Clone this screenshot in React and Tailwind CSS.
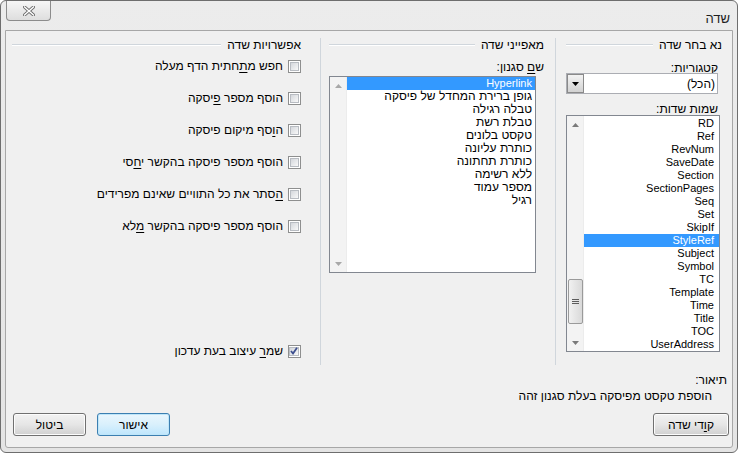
import React from 'react'

const fieldNames = [
  'RD', 'Ref', 'RevNum', 'SaveDate', 'Section', 'SectionPages', 'Seq', 'Set', 'SkipIf',
  'StyleRef', 'Subject', 'Symbol', 'TC', 'Template', 'Time', 'Title', 'TOC', 'UserAddress',
]

const styleNames = [
  'Hyperlink',
  'גופן ברירת המחדל של פיסקה',
  'טבלה רגילה',
  'טבלת רשת',
  'טקסט בלונים',
  'כותרת עליונה',
  'כותרת תחתונה',
  'ללא רשימה',
  'מספר עמוד',
  'רגיל',
]

function Heading({ children }) {
  return (
    <div className="flex items-center h-[14px] gap-[6px]">
      <span className="whitespace-nowrap">{children}</span>
      <div className="flex-1 h-[2px] border-t border-t-[#d0d6dc] border-b border-b-white" />
    </div>
  )
}

function Arrow({ up, color = '#6d6d6d' }) {
  // tiny scroll arrow, drawn with svg
  return (
    <svg width="7" height="4" viewBox="0 0 7 4" className={up ? '' : 'rotate-180'}>
      <path d="M0 4 L3.5 0 L7 4 Z" fill={color} />
    </svg>
  )
}

function Scrollbar({ thumb, arrowColor }) {
  return (
    <div className="w-[17px] shrink-0 flex flex-col bg-[#f3f3f3] border-r border-r-[#ececec]">
      <div className="h-[17px] flex items-center justify-center">
        <Arrow up color={arrowColor} />
      </div>
      <div className="flex-1">
        {thumb && (
          <div className="mt-[146px] mx-auto w-[15px] h-[45px] rounded-[2px] border border-[#9a9a9a] bg-gradient-to-r from-[#f1f1f1] to-[#d9d9d9] flex flex-col items-center justify-center gap-[1px]">
            <div className="w-[7px] h-[1px] bg-[#5c5c5c]" />
            <div className="w-[7px] h-[1px] bg-[#5c5c5c]" />
            <div className="w-[7px] h-[1px] bg-[#5c5c5c]" />
          </div>
        )}
      </div>
      <div className="h-[17px] flex items-center justify-center">
        <Arrow color={arrowColor} />
      </div>
    </div>
  )
}

function Checkbox({ checked }) {
  return (
    <span className="w-[13px] h-[13px] shrink-0 border border-[#8e8f8f] bg-white p-[1px] flex">
      <span className="flex-1 border border-[#b8bcc2] bg-gradient-to-br from-[#d4d7dc] to-[#f9f9f9] flex items-center justify-center">
        {checked && (
          <svg width="8" height="8" viewBox="0 0 8 8">
            <path d="M1 4 L3 6.5 L7 0.8" stroke="#3d4f8f" strokeWidth="1.8" fill="none" />
          </svg>
        )}
      </span>
    </span>
  )
}

function Option({ checked, children }) {
  return (
    <div className="flex items-center h-[14px] gap-[5px]">
      <Checkbox checked={checked} />
      <span className="whitespace-nowrap">{children}</span>
    </div>
  )
}

function Button({ children, primary, className = '' }) {
  return (
    <div
      className={`h-[23px] rounded-[3px] border flex items-center justify-center ${
        primary
          ? 'border-[#3c7fb1] bg-gradient-to-b from-[#eaf6fd] via-[#d9f0fc] to-[#bee6fd] shadow-[inset_0_0_0_1px_#bfe6f9]'
          : 'border-[#707070] bg-gradient-to-b from-[#f2f2f2] via-[#e6e6e6] to-[#d0d0d0] shadow-[inset_0_0_0_1px_#fcfcfc]'
      } ${className}`}
    >
      {children}
    </div>
  )
}

export default function App() {
  return (
    <div
      dir="rtl"
      className="w-[738px] h-[453px] bg-gradient-to-b from-[#ececec] to-[#e4e4e4] border border-[#6e6e6e] rounded-[6px] flex flex-col overflow-hidden text-[12px] text-black font-['Liberation_Sans',Arial,sans-serif]"
    >
      {/* title bar */}
      <div className="h-[29px] shrink-0 flex items-start justify-between">
        <div className="pr-[7px] pt-[8px] text-[13px] text-[#1e1e1e]">שדה</div>
        <div className="ml-[5px] w-[45px] h-[20px] rounded-b-[4px] border border-t-0 border-[#8c8c8c] bg-gradient-to-b from-[#f6f6f6] to-[#dedede] flex items-center justify-center">
          <svg width="12" height="10" viewBox="0 0 12 10">
            <path d="M1.5 1 L10.5 9 M10.5 1 L1.5 9" stroke="#6b6b6b" strokeWidth="3.2" strokeLinecap="square" />
            <path d="M1.5 1 L10.5 9 M10.5 1 L1.5 9" stroke="#ffffff" strokeWidth="1.4" strokeLinecap="square" />
          </svg>
        </div>
      </div>

      {/* client area */}
      <div className="mx-[4px] mb-[4px] flex-1 border border-[#a7a7a7] rounded-b-[3px] bg-[#f0f0f0] flex flex-col">
        <div className="flex h-[334px] pt-[7px]">
          {/* choose field */}
          <div className="w-[177px] shrink-0 border-l border-l-[#d0d6dc] pr-[10px] pl-[10px] flex flex-col">
            <Heading>נא בחר שדה</Heading>
            <div className="mt-[7px] h-[14px] pr-[4px]">
              ק<span className="underline underline-offset-2">ט</span>גוריות:
            </div>
            <div className="mr-[4px] h-[21px] border border-[#abadb3] bg-white flex items-center">
              <span className="flex-1 pr-[2px]">(הכל)</span>
              <span className="w-[17px] h-[19px] border border-[#8a8a8a] bg-gradient-to-b from-[#f3f3f3] to-[#d2d2d2] flex items-center justify-center">
                <svg width="7" height="4" viewBox="0 0 7 4">
                  <path d="M0 0 L7 0 L3.5 4 Z" fill="#000" />
                </svg>
              </span>
            </div>
            <div className="mt-[6px] h-[14px] pr-[4px]">
              <span className="underline underline-offset-2">ש</span>מות שדות:
            </div>
            <div className="mt-[1px] mr-[2px] h-[237px] border border-[#828790] bg-white flex overflow-hidden">
              <div className="flex-1 pt-[1px] text-[11px]">
                {fieldNames.map((f) => (
                  <div
                    key={f}
                    className={`h-[13px] leading-[13px] pr-[5px] ${f === 'StyleRef' ? 'bg-[#3399ff] text-white' : ''}`}
                  >
                    {f}
                  </div>
                ))}
              </div>
              <Scrollbar thumb arrowColor="#7a7a7a" />
            </div>
          </div>

          {/* field properties */}
          <div className="w-[235px] shrink-0 border-l border-l-[#d0d6dc] pr-[11px] pl-[8px] flex flex-col">
            <Heading>מאפייני שדה</Heading>
            <div className="mt-[6px] h-[14px]">
              ש<span className="underline underline-offset-2">ם</span> סגנון:
            </div>
            <div className="mt-[4px] ml-0 mr-[8px] h-[197px] border border-[#828790] bg-white flex overflow-hidden">
              <div className="flex-1">
                {styleNames.map((s, i) => (
                  <div
                    key={s}
                    className={`h-[13px] leading-[13px] pr-[3px] ${i === 0 ? 'bg-[#3399ff] text-white text-[11px]' : ''}`}
                  >
                    {s}
                  </div>
                ))}
              </div>
              <Scrollbar arrowColor="#a8a8a8" />
            </div>
          </div>

          {/* field options */}
          <div className="flex-1 pr-[19px] pl-[6px] flex flex-col">
            <Heading>אפשרויות שדה</Heading>
            <div className="mt-[7px] flex flex-col gap-[18px]">
              <Option>
                חפש מ<span className="underline underline-offset-2">ת</span>חתית הדף מעלה
              </Option>
              <Option>
                הוסף מספר <span className="underline underline-offset-2">פ</span>יסקה
              </Option>
              <Option>
                ה<span className="underline underline-offset-2">ו</span>סף מיקום פיסקה
              </Option>
              <Option>
                הוסף מספר פיסקה בהקשר י<span className="underline underline-offset-2">ח</span>סי
              </Option>
              <Option>
                <span className="underline underline-offset-2">ה</span>סתר את כל התוויים שאינם מפרידים
              </Option>
              <Option>
                הוסף מספר פיסקה בהקשר <span className="underline underline-offset-2">מ</span>לא
              </Option>
            </div>
            <div className="mt-auto mb-[7px]">
              <Option checked>
                שמ<span className="underline underline-offset-2">ר</span> עיצוב בעת עדכון
              </Option>
            </div>
          </div>
        </div>

        {/* description */}
        <div className="mt-[6px] pr-[5px] h-[14px]">תיאור:</div>
        <div className="mt-[2px] pr-[20px] h-[14px]">הוספת טקסט מפיסקה בעלת סגנון זהה</div>

        {/* buttons */}
        <div className="mt-[12px] flex items-center pr-[3px] pl-[7px]">
          <Button className="w-[76px]">
            ק<span className="underline underline-offset-2">ו</span>די שדה
          </Button>
          <div className="flex-1" />
          <Button primary className="w-[73px]">אישור</Button>
          <Button className="w-[73px] mr-[11px]">ביטול</Button>
        </div>
      </div>
    </div>
  )
}
